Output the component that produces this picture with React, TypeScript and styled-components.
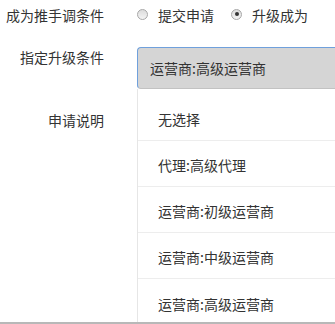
import React from 'react';
import styled, { createGlobalStyle } from 'styled-components';

const GlobalStyle = createGlobalStyle`
  html, body {
    margin: 0;
    padding: 0;
    background: #fff;
  }
  body {
    font-family: "Microsoft YaHei", "Noto Sans CJK SC", "Noto Sans", sans-serif;
    font-size: 14px;
    color: #333;
  }
`;

const Page = styled.div`
  box-sizing: border-box;
  width: 335px;
  height: 324px;
  overflow: hidden;
  border-bottom: 2px solid #b8b8b8;
`;

const Row = styled.div<{ $top?: number; $height?: number }>`
  display: flex;
  align-items: ${p => (p.$height ? 'center' : 'flex-start')};
  margin-top: ${p => p.$top || 0}px;
  height: ${p => (p.$height ? `${p.$height}px` : 'auto')};
`;

const Label = styled.div`
  width: 104px;
  flex-shrink: 0;
  text-align: right;
  line-height: 20px;
  margin-right: 33px;
  white-space: nowrap;
`;

const RadioGroup = styled.div`
  display: flex;
  align-items: center;
`;

const RadioItem = styled.label`
  display: flex;
  align-items: center;
  margin-right: 17px;
  line-height: 20px;
`;

const RadioDot = styled.span<{ $checked?: boolean }>`
  box-sizing: border-box;
  width: 11px;
  height: 11px;
  border-radius: 50%;
  border: 1px solid #a7a7a7;
  background: linear-gradient(#dcdcdc, #f4f4f4);
  margin-right: 10px;
  margin-top: -1px;
  display: flex;
  align-items: center;
  justify-content: center;
  &::after {
    content: '';
    display: ${p => (p.$checked ? 'block' : 'none')};
    width: 4px;
    height: 4px;
    border-radius: 50%;
    background: #333;
  }
`;

const SelectWrap = styled.div`
  position: relative;
  width: 260px;
  flex-shrink: 0;
`;

const SelectBox = styled.div`
  box-sizing: border-box;
  height: 42px;
  display: flex;
  align-items: center;
  padding-left: 12px;
  background: #d5d5d5;
  border-top: 1px solid #6fa0dc;
  border-left: 1px solid #6fa0dc;
  border-bottom: 1px solid #c2c2c2;
  border-radius: 4px 0 0 4px;
`;

// dropdown menu lies over the form rows below it
const Options = styled.ul`
  position: absolute;
  top: 42px;
  left: 0;
  right: 0;
  margin: 0;
  padding: 6px 0 0;
  list-style: none;
  background: #fff;
  border-left: 1px solid #e6e6e6;
  z-index: 2;
`;

const Option = styled.li`
  box-sizing: border-box;
  height: 46px;
  padding: 3px 0 0 20px;
  display: flex;
  align-items: center;
  border-bottom: 1px solid #ededed;
  &:last-child {
    border-bottom: none;
  }
`;

const options = ['无选择', '代理:高级代理', '运营商:初级运营商', '运营商:中级运营商', '运营商:高级运营商'];

export default function App() {
  return (
    <Page>
      <GlobalStyle />
      <Row $height={29}>
        <Label>成为推手调条件</Label>
        <RadioGroup>
          <RadioItem>
            <RadioDot />
            提交申请
          </RadioItem>
          <RadioItem>
            <RadioDot $checked />
            升级成为
          </RadioItem>
        </RadioGroup>
      </Row>
      <Row $top={18}>
        <Label>指定升级条件</Label>
        <SelectWrap>
          <SelectBox>运营商:高级运营商</SelectBox>
          <Options>
            {options.map(o => (
              <Option key={o}>{o}</Option>
            ))}
          </Options>
        </SelectWrap>
      </Row>
      <Row $top={21}>
        <Label>申请说明</Label>
      </Row>
    </Page>
  );
}
